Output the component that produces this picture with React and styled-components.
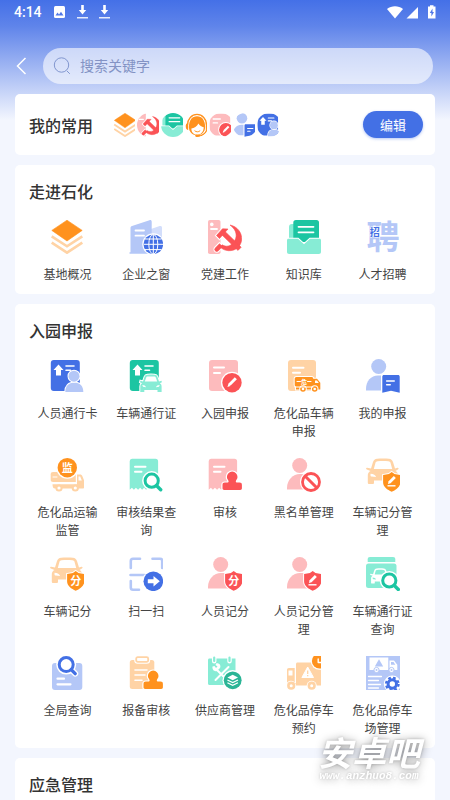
import React from 'react';
import styled, { createGlobalStyle } from 'styled-components';

const GlobalStyle = createGlobalStyle`
  * {
    box-sizing: border-box;
  }
  body {
    margin: 0;
    background: #f3f6fe;
    color: #333;
    font-family: 'Noto Sans CJK SC', sans-serif;
  }
  button,
  input {
    font-family: inherit;
  }
`;

const blue = '#4370e5';
const lightBlue = '#b4c7f7';
const orange = '#ff921e';
const lightOrange = '#ffd3a5';
const green = '#1cc5a2';
const lightGreen = '#87ecd5';
const red = '#fb5356';
const pink = '#fdbbbd';

const Page = styled.div`
  height: 100vh;
  overflow-y: auto;
  scrollbar-width: none;
  background: linear-gradient(#4470e7 0, #5f84ea 26px, #f3f6fe 120px);
`;

const StatusBar = styled.div`
  height: 24px;
  padding: 0 14px;
  display: flex;
  align-items: center;
  justify-content: space-between;
  color: #fff;
`;

const StatusGroup = styled.div`
  display: flex;
  align-items: center;
  gap: ${({ $gap }) => $gap};
`;

const Clock = styled.span`
  font-family: Roboto, sans-serif;
  font-size: 14px;
  font-weight: 500;
  line-height: 24px;
`;

const Header = styled.header`
  display: flex;
  align-items: center;
  padding: 24px 17px 10px 16px;
`;

const BackButton = styled.button`
  width: 27px;
  height: 36px;
  padding: 0;
  border: 0;
  background: none;
  display: flex;
  align-items: center;
  cursor: pointer;
`;

const SearchBox = styled.label`
  flex: 1;
  height: 36px;
  padding: 0 10px;
  display: flex;
  align-items: center;
  gap: 9px;
  border-radius: 18px;
  background: rgba(255, 255, 255, 0.6);
`;

const SearchInput = styled.input`
  flex: 1;
  min-width: 0;
  padding: 0 0 2px;
  border: 0;
  outline: 0;
  background: none;
  font-size: 14px;
  line-height: 20px;
  color: #333;
  &::placeholder {
    color: #8393c4;
    opacity: 1;
  }
`;

const Main = styled.main`
  padding: 0 15px;
  display: flex;
  flex-direction: column;
  gap: 10px;
`;

const Card = styled.section`
  background: #fff;
  border-radius: 5px;
`;

const Title = styled.h2`
  margin: 0;
  font-size: 16px;
  line-height: 24px;
  font-weight: 500;
  color: #333;
`;

const FavoriteCard = styled(Card)`
  height: 61px;
  padding: 0 12px 0 14px;
  display: flex;
  align-items: center;
`;

const Favorites = styled.div`
  flex: 1;
  padding-left: 20px;
  display: flex;
  gap: 2px;
`;

const FavoriteSlot = styled.div`
  width: 22px;
  height: 24px;
  overflow: hidden;
`;

const FavoriteCircle = styled.div`
  width: 24px;
  height: 24px;
  border-radius: 50%;
  overflow: hidden;
`;

const EditButton = styled.button`
  width: 60px;
  height: 27px;
  padding: 0;
  border: 0;
  border-radius: 14px;
  background: ${blue};
  box-shadow: 0 1px 3px rgba(67, 112, 229, 0.4);
  color: #fff;
  font-size: 13px;
  line-height: 26px;
  cursor: pointer;
`;

const SectionTitle = styled(Title)`
  padding: 14px 14px 17px;
`;

const Grid = styled.div`
  display: grid;
  grid-template-columns: repeat(5, 1fr);
  row-gap: 18px;
  padding: 0 13px 11px;
`;

const Item = styled.button`
  padding: 0 8px;
  border: 0;
  background: none;
  display: flex;
  flex-direction: column;
  align-items: center;
  gap: 11px;
  color: #444;
  font-size: 12px;
  line-height: 18px;
  text-align: center;
  cursor: pointer;
`;

const IconSvg = styled.svg`
  display: block;
  flex: none;
`;

const Watermark = styled.div`
  position: fixed;
  right: 30px;
  bottom: 19px;
  text-align: center;
  font-style: italic;
  color: #fff;
  pointer-events: none;
  text-shadow: 0 0 3px rgba(0, 0, 0, 0.2), 0 1px 10px rgba(0, 0, 0, 0.4);
`;

const WatermarkName = styled.div`
  font-size: 34px;
  line-height: 38px;
  font-weight: 700;
`;

const WatermarkSite = styled.div`
  font-family: 'Liberation Mono', monospace;
  font-size: 11px;
  line-height: 10px;
  font-weight: 700;
`;

const glyphFont = "'Noto Sans CJK SC', sans-serif";

const Lines = ({ d, color = '#fff', w = 2 }) => (
  <path d={d} stroke={color} strokeWidth={w} strokeLinecap="round" strokeLinejoin="round" fill="none" />
);

// pieces shared by several icons
const Pencil = () => (
  <g fill="#fff">
    <path d="M20.2 26.9l.6-2.7 6-6 2.1 2.1-6 6z" />
    <path d="M19.4 28l1-3 2 2z" />
  </g>
);

const Shield = ({ glyph }) => (
  <g>
    <path
      d="M25.7 14l2.8 2 5.8 1v7.6c0 4.4-4.3 7.4-8.6 9.2-4.3-1.8-8.6-4.8-8.6-9.2V17l5.8-1z"
      fill={glyph.color}
      stroke="#fff"
      strokeWidth="2"
      paintOrder="stroke"
    />
    {glyph.text ? (
      <text x="25.7" y="27.6" fontSize="11" fontWeight="700" textAnchor="middle" fill="#fff" fontFamily={glyphFont}>
        {glyph.text}
      </text>
    ) : (
      <g>
        <path d="M22 26l.6-2.8 5.2-5.2 2 2-5.2 5.2z" fill="#fff" />
        <path d="M21.5 27.8h8" stroke="#fff" strokeWidth="1.4" />
      </g>
    )}
  </g>
);

const Person = ({ color }) => (
  <g fill={color}>
    <circle cx="12.7" cy="7.5" r="7.5" />
    <path d="M0 31.5V30c0-8 6-14 13-14h4c6 0 8 5 8 10v5.5z" />
  </g>
);

const Magnifier = ({ cx, cy, r = 6.6, color, end = 9 }) => (
  <g fill="none" strokeLinecap="round">
    <circle cx={cx} cy={cy} r={r} stroke="#fff" strokeWidth="6" fill="#fff" />
    <path d={`M${cx + 5} ${cy + 5}L${cx + end} ${cy + end}`} stroke="#fff" strokeWidth="6" />
    <circle cx={cx} cy={cy} r={r} stroke={color} strokeWidth="3" />
    <path d={`M${cx + 5} ${cy + 5}L${cx + end} ${cy + end}`} stroke={color} strokeWidth="3.4" />
  </g>
);

const Stamp = ({ color, y = 0 }) => (
  <path
    transform={`translate(0 ${y})`}
    d="M24.2 13.6a5.3 5.3 0 0 1 5.3 5.3c0 2.2-1.7 3.200-1.700 4.600 0 .8.5 1.100 1.400 1.100h2.300c1.600 0 2.400.8 2.400 2.400v3.200c0 1.100-.6 1.700-1.700 1.700H16.200c-1.100 0-1.700-.6-1.700-1.700V27c0-1.600.8-2.400 2.400-2.400h2.300c.9 0 1.400-.3 1.400-1.100 0-1.400-1.700-2.400-1.700-4.600a5.300 5.300 0 0 1 5.300-5.300z"
    fill={color}
    stroke="#fff"
    strokeWidth="2.400"
    paintOrder="stroke"
  />
);

const Receipt = ({ color }) => (
  <g>
    <path
      d="M3 .7h23.5a2.6 2.6 0 0 1 2.6 2.6v28.4l-2-2-2 2-2-2-2 2-2-2-2 2-2-2-2 2-2-2-2 2-2.2-2-2 2-2-2-2.2 2V3.3A2.6 2.6 0 0 1 3 .7z"
      fill={color}
    />
    <Lines d="M6 8.7h10.5M6 13.7h6.5" />
  </g>
);

const CarSide = ({ color }) => (
  <path
    fillRule="evenodd"
    fill={color}
    d="M5 10.5L7 4c.7-2 2-3 4-3.300C14.500.3 19.500.3 23 .7c2 .3 3.300 1.300 4 3.300l2 6.500 2.500-.8c1.200-.3 1.500 1.300.4 1.800L29.500 13c2 1 2.500 2.500 2.500 4.500v7c0 1-.6 1.500-1.500 1.500H27.500c-1 0-1.500-.5-1.500-1.500V22.500H8v2c0 1-.5 1.500-1.500 1.500H3.300c-1 0-1.500-.5-1.500-1.500v-7c0-2 .7-3.500 2.700-4.500L.8 11.500C-.4 11 0 9.400 1.200 9.700zM7.800 11h18.400L24.500 4.700c-.4-1-1-1.400-2-1.500-3.500-.4-7.500-.4-11 0-1 .1-1.600.5-2 1.500zM4.500 15.800v1.500c0 .8.4 1.200 1.200 1.300l4.300.5c-.3-2-2.500-3.200-5.500-3.300zM28.500 15.800c-3 .1-5.200 1.300-5.500 3.300l4.300-.5c.8-.1 1.200-.5 1.200-1.300z"
  />
);

const PassCard = ({ color }) => (
  <g>
    <rect x=".8" y="1" width="29" height="31" rx="3" fill={color} />
    <path d="M8.500 5.500l5 5.500h-2.500v5.500H6V11H3.500z" fill="#fff" />
    <Lines d="M16 7h8M16 11.200h4.500" w={1.600} />
  </g>
);

const icons = {
  layers: (
    <g>
      <path d="M17 .2L32.200 10.400 17 21 1.800 10.400z" fill={orange} stroke={orange} strokeWidth=".6" strokeLinejoin="round" />
      <path d="M1.700 16.300l15.300 10 15.300-10M1.700 22.700l15.300 10 15.300-10" fill="none" stroke={lightOrange} strokeWidth="2.600" />
    </g>
  ),
  building: (
    <g>
      <path d="M22 9l8.700-3c1.300-.4 2.300.3 2.300 1.500V24H22z" fill="#d3defb" />
      <path d="M1.500 8c0-1 .5-1.700 1.500-2L20.500.2c1.300-.4 2.200.3 2.200 1.500V33.700H.5v-1.500h1z" fill={lightBlue} />
      <Lines d="M6.500 10.500h8.500M6.500 15.700h8.500" w={1.800} />
      <circle cx="24.300" cy="24.300" r="11" fill="#fff" />
      <circle cx="24.300" cy="24.300" r="9.800" fill={blue} />
      <g fill="none" stroke="#fff" strokeWidth="1">
        <ellipse cx="24.300" cy="24.300" rx="4.500" ry="9.800" />
        <path d="M24.300 14.500v19.600M14.500 24.300h19.600M16 19h16.600M16 29.600h16.600" />
      </g>
    </g>
  ),
  party: (
    <g>
      <rect x="0" y="0" width="12.500" height="34" rx="1.800" fill={pink} />
      <circle cx="3.800" cy="4.400" r="1.800" fill="#fff" />
      <Lines d="M3 9h6" w={1.800} />
      {[
        { color: '#fff', w: 2.600 },
        { color: red, w: 0.600 },
      ].map(({ color, w }) => (
        <g key={color} fill={color} stroke={color} strokeWidth={w}>
          <path d="M22 5c7.500 1.500 12.300 8 11.600 15-.7 6.500-6 11-13 10.700-3.500-.2-6.300-1.500-8.300-3.700l1.800-2.200c4 2.600 8.400 1.500 11.400-2.300 4-5 4-12-3.500-17.500z" />
          <path d="M8.500 15.500l6-6.700 5.500.2-8.500 9.500z" />
          <path d="M13.500 14.500l3.200-3.300 16.500 16-3.200 3.200z" />
          <path d="M11.500 23.700l3 2.900-4.200 4.200a2 2 0 0 1-3-2.800z" />
        </g>
      ))}
    </g>
  ),
  library: (
    <g>
      <rect x="2" y="4" width="14" height="22" rx="3" fill={lightGreen} />
      <path d="M9 0h20.500A2.500 2.500 0 0 1 32 2.500V22H6.300V2.700A2.700 2.700 0 0 1 9 0z" fill={green} />
      <path
        d="M1.500 18.700H11l6 5.500 6-5.500h9.500c1 0 1.500.6 1.500 1.500v11.600c0 1.500-.8 2.200-2.200 2.200H2.200C.8 34 0 33.300 0 31.800V20.200c0-.9.500-1.500 1.500-1.500z"
        fill={lightGreen}
        stroke="#fff"
        strokeWidth="2"
        paintOrder="stroke"
      />
      <Lines d="M11.500 6.800h15M11.500 12.300h15" w={1.800} />
    </g>
  ),
  recruit: (
    <g fontFamily={glyphFont} fontWeight="700">
      <text x="17" y="29" fontSize="33" textAnchor="middle" fill={lightBlue}>
        聘
      </text>
      <text x="8.700" y="16" fontSize="10" textAnchor="middle" fill={blue} stroke="#fff" strokeWidth="1" paintOrder="stroke">
        招
      </text>
    </g>
  ),
  personPass: (
    <g>
      <PassCard color={blue} />
      <g fill={lightBlue} stroke="#fff" strokeWidth="2" paintOrder="stroke">
        <path d="M15.300 33c0-6 3.500-9.500 9-9.500s9 3.500 9 9.500z" />
        <circle cx="24" cy="17.200" r="5.500" />
      </g>
    </g>
  ),
  carPass: (
    <g>
      <PassCard color={green} />
      <path
        d="M14 22.500l1.500-4.500c.5-1.500 1.500-2.200 3-2.300 2.300-.2 4.700-.2 7 0 1.500.1 2.500.8 3 2.300l1.500 4.500 2.500-.8.4 1.500-2 1c1.200.8 1.700 1.700 1.700 3.300V33h-4.100v-2H15.300v2h-4v-5.500c0-1.600.5-2.500 1.700-3.300l-2-1 .4-1.500z"
        fill={lightGreen}
        stroke="#fff"
        strokeWidth="2"
        paintOrder="stroke"
      />
      <path d="M15.800 22.500l1.300-3.700c.3-.8.800-1.100 1.600-1.200 2-.2 4.400-.2 6.600 0 .8.100 1.300.4 1.600 1.200l1.300 3.700z" fill="#fff" />
      <path d="M13.300 26c2 0 3.200.7 3.700 2.200l-3-.4zM30.700 26c-2 0-3.200.7-3.700 2.200l3-.4z" fill="#fff" />
    </g>
  ),
  docEdit: (
    <g>
      <rect x="1" y="1" width="29" height="31" rx="3" fill={pink} />
      <Lines d="M6 8.500h10M6 14h6" />
      <circle cx="24" cy="23.700" r="11" fill="#fff" />
      <circle cx="24" cy="23.700" r="9.700" fill={red} />
      <Pencil />
    </g>
  ),
  hazardDoc: (
    <g>
      <rect x="1" y="1" width="28" height="31" rx="3" fill={lightOrange} />
      <Lines d="M6 8.700h10.500M6 13.700h7" />
      <g fill={orange} stroke="#fff" strokeWidth="2" paintOrder="stroke">
        <path d="M9.500 18h15c1 0 1.700.7 1.700 1.700h3.800l3.300 4v6.800H9v-2.800c-.9-.3-1.300-1-1.300-1.900v-6c0-1 .7-1.800 1.800-1.800z" />
        <circle cx="16" cy="30" r="2.800" />
        <circle cx="27.700" cy="30" r="2.800" />
      </g>
      <path d="M28 21.500h2l1.800 2.600H28z" fill="#fff" />
      <circle cx="16" cy="30" r="1.300" fill="#fff" />
      <circle cx="27.700" cy="30" r="1.300" fill="#fff" />
      <Lines d="M10 22.500h3.500M20.500 22.500H24M8 28h18" w={1} />
      <text x="17" y="25" fontSize="6" fontWeight="700" textAnchor="middle" fill="#fff" fontFamily={glyphFont}>
        危
      </text>
    </g>
  ),
  myApply: (
    <g>
      <circle cx="12.700" cy="7.500" r="7.500" fill={lightBlue} />
      <path d="M0 31.500V30c0-8 5-13.500 12-13.500h3v15z" fill={lightBlue} />
      <path
        d="M18 16h14c1 0 1.700.7 1.700 1.700v16.100L25 31.700l-8.700 2.100V17.700c0-1 .7-1.700 1.700-1.700z"
        fill={blue}
        stroke="#fff"
        strokeWidth="2"
        paintOrder="stroke"
      />
      <Lines d="M20.700 22h7.500M20.700 25.800h3.500" w={1.600} />
    </g>
  ),
  transport: (
    <g>
      <path
        d="M3 14h20.500c1.500 0 2.300.8 2.300 2.200V24H3C1.500 24 .7 23.200.7 21.800v-5.600C.7 14.800 1.500 14 3 14z"
        fill={lightOrange}
      />
      <path
        d="M27 16.500h3c1.200 0 2 .6 2.400 1.700l1.600 4v7.300c0 .7-.4 1-1 1H5c-1.700 0-2.500-1.500-2.500-4.300h24.500z"
        fill={lightOrange}
      />
      <path d="M28.500 18.500h1.700l1.600 4h-3.300z" fill="#fff" />
      <Lines d="M3 19h4" w={1} />
      <g fill="#fff" stroke={lightOrange} strokeWidth="2">
        <circle cx="9" cy="30" r="2.600" />
        <circle cx="25.300" cy="30" r="2.600" />
      </g>
      <circle cx="17.300" cy="9.700" r="11" fill="#fff" />
      <circle cx="17.300" cy="9.700" r="9.700" fill={orange} />
      <text x="17.300" y="13.900" fontSize="11" fontWeight="700" textAnchor="middle" fill="#fff" fontFamily={glyphFont}>
        监
      </text>
    </g>
  ),
  auditQuery: (
    <g>
      <Receipt color={lightGreen} />
      <Magnifier cx={22.700} cy={22.700} color={green} />
    </g>
  ),
  audit: (
    <g>
      <Receipt color={pink} />
      <Stamp color={red} />
    </g>
  ),
  blacklist: (
    <g>
      <Person color={pink} />
      <circle cx="24" cy="24" r="11" fill="#fff" />
      <circle cx="24" cy="24" r="8.500" fill="none" stroke={red} strokeWidth="2.800" />
      <path d="M18 18l12 12" stroke={red} strokeWidth="3" />
    </g>
  ),
  carScoreManage: (
    <g>
      <CarSide color={lightOrange} />
      <Shield glyph={{ color: orange }} />
    </g>
  ),
  carScore: (
    <g>
      <CarSide color={lightOrange} />
      <Shield glyph={{ color: orange, text: '分' }} />
    </g>
  ),
  scan: (
    <g>
      <Lines
        d="M1.800 11V4c0-1.500.7-2.200 2.200-2.200h7M23.500 1.800H31c1.500 0 2.200.7 2.200 2.200v7M1.800 24v6.500c0 1.500.7 2.200 2.200 2.200h6M1.500 18h14"
        color={lightBlue}
        w={2.600}
      />
      <circle cx="24.300" cy="24.300" r="11" fill="#fff" />
      <circle cx="24.300" cy="24.300" r="9.800" fill={blue} />
      <path d="M18.800 22.300h5.700v-3.300l6.300 5.300-6.300 5.300v-3.300h-5.700z" fill="#fff" />
    </g>
  ),
  personScore: (
    <g>
      <Person color={pink} />
      <Shield glyph={{ color: red, text: '分' }} />
    </g>
  ),
  personScoreManage: (
    <g>
      <Person color={pink} />
      <Shield glyph={{ color: red }} />
    </g>
  ),
  carPassQuery: (
    <g>
      <path d="M4 0h23c1.500 0 2.300.8 2.300 2.300V5H1.700V2.300C1.700.8 2.500 0 4 0z" fill={lightGreen} />
      <rect x="0" y="6.500" width="30.500" height="24.500" rx="2.500" fill={lightGreen} />
      <g transform="translate(4 11) scale(.6)">
        <CarSide color="#fff" />
      </g>
      <Magnifier cx={23.300} cy={23.500} color={green} />
    </g>
  ),
  globalQuery: (
    <g>
      <rect x="2" y="7" width="30.300" height="27" rx="3" fill={lightBlue} />
      <Magnifier cx={16.200} cy={8.600} r={7} color={blue} />
      <Lines d="M7.500 22.700H14M7.500 28.300h13" w={2.200} />
    </g>
  ),
  reportAudit: (
    <g>
      <rect x=".8" y="4" width="24.500" height="29" rx="2.500" fill={lightOrange} />
      <rect x="7.200" y="1.200" width="12" height="4.600" rx="1.500" fill="#fff" stroke="#fff" strokeWidth="4" />
      <rect x="7.200" y="1.200" width="12" height="4.600" rx="1.500" fill="#fff" stroke={lightOrange} strokeWidth="1.800" />
      <Lines d="M6 14h12M6 19h10M6 24.200h7" w={1.600} />
      <Stamp color={orange} y={1} />
    </g>
  ),
  supplier: (
    <g>
      <path d="M1.500 2.500h26v26.500h-26C.6 29 0 28.400 0 27.500V4c0-.9.600-1.500 1.500-1.500z" fill={lightGreen} />
      <Lines d="M6.200 1.800v3.500M21.500 1.800v3.500" w={4.500} />
      <Lines d="M6.200 1.500v3.500M21.500 1.500v3.500" color={lightGreen} w={2.200} />
      <Lines d="M8 13l11.500 11.500M20.500 11L7.500 24" w={2} />
      <path d="M4.500 10.500l2-.5 1.500 2 1.500-1.500-2-1.500.8-1.800c3-.5 5 2 3.700 4.800L9 15c-2.800 1-5-1.500-4.500-4.500z" fill="#fff" />
      <circle cx="24.700" cy="24.300" r="10.200" fill="#fff" />
      <circle cx="24.700" cy="24.300" r="8.900" fill="#2bb596" />
      <path d="M24.700 18.800l5.300 2.700-5.300 2.700-5.300-2.700z" fill="#fff" />
      <path d="M19.400 24l5.300 2.600 5.300-2.600M19.400 26.700l5.300 2.600 5.300-2.600" stroke="#fff" strokeWidth="1.200" fill="none" />
    </g>
  ),
  parkingBook: (
    <g>
      <path d="M9 8c0-1 .6-1.600 1.600-1.600H34v22H9z" fill={lightOrange} />
      <path d="M0 29V14c0-1.200.7-1.900 1.900-1.900H7.700V29z" fill={lightOrange} />
      <rect x="0" y="27" width="34" height="2.500" fill={lightOrange} />
      <rect x="1.500" y="14.500" width="4" height="5" fill="#fff" />
      <path d="M20.700 11l5.800 10.500H14.900z" fill="#fff" stroke="#fff" strokeLinejoin="round" />
      <path d="M20.700 14.500v3.500M20.700 19v1.300" stroke={lightOrange} strokeWidth="1.300" />
      <circle cx="4" cy="29.700" r="5" fill="#fff" />
      <circle cx="24.700" cy="29.700" r="5" fill="#fff" />
      <g fill="#fff" stroke={lightOrange} strokeWidth="2.600">
        <circle cx="4.200" cy="29.700" r="2.800" />
        <circle cx="24.700" cy="29.700" r="2.800" />
      </g>
      <circle cx="32.500" cy="5" r="8.800" fill="#fff" />
      <circle cx="32.500" cy="5" r="7.600" fill={orange} />
      <Lines d="M31.200 3v3.500h3" w={1.400} />
    </g>
  ),
  parkingManage: (
    <g>
      <rect width="34" height="34" fill={lightBlue} />
      <path d="M3.500 1.500h18.800V14H3.500zM23.500 4.500H28l3.300 4.300V14h-7.800z" fill="#fff" />
      <path d="M13 3.300l4.200 7.200H8.800z" fill={lightBlue} />
      <path d="M25 6h2.500l1.800 2.700H25z" fill={lightBlue} />
      <g fill="#fff" stroke={lightBlue} strokeWidth="1">
        <circle cx="10.500" cy="14" r="2.600" />
        <circle cx="25.500" cy="14" r="2.600" />
      </g>
      <g fill={lightBlue}>
        <circle cx="10.500" cy="14" r="1" />
        <circle cx="25.500" cy="14" r="1" />
      </g>
      <Lines d="M2.500 20.500h13M2.500 24.500h10M2.500 28.500h12M2.500 32h10" w={1.300} />
      <circle cx="26.300" cy="28" r="8.500" fill="#fff" />
      <circle cx="26.300" cy="28" r="4.200" fill="none" stroke={blue} strokeWidth="3" />
      <circle cx="26.300" cy="28" r="6.300" fill="none" stroke={blue} strokeWidth="2.200" strokeDasharray="2.700 2.250" />
    </g>
  ),
  service: (
    <g>
      <path d="M3.500 17a13.500 15 0 0 1 27 0" fill="none" stroke={orange} strokeWidth="1.800" />
      <path d="M1 19c0-3 1-5 3.500-5v10C2.500 24 1 22 1 19zM33 19c0-3-1-5-3.500-5v10c2 0 3.500-2 3.500-5z" fill={orange} />
      <path d="M5.500 20C5.500 10 10 4.500 17 4.500S28.500 10 28.500 20c0 7-5 12-11.500 12S5.500 27 5.500 20z" fill={orange} />
      <path d="M9 22c4-.3 8-3 10-7 2 3 4.500 4.800 7.500 5.300 0 6-3.800 10.700-8.800 10.700S9 27.500 9 22z" fill="#fff" />
      <path d="M13.500 25c2.500 2.200 5.500 2.200 8 0" fill="none" stroke={orange} strokeWidth="1.400" />
      <path d="M31 23c-1 5-4 8-10 9.500" fill="none" stroke={orange} strokeWidth="1.600" />
      <rect x="14.500" y="30.500" width="7" height="3.500" rx="1.700" fill={orange} />
    </g>
  ),
};

const Icon = ({ name, size = 34 }) => (
  <IconSvg width={size} height={size} viewBox="0 0 34 34" aria-hidden="true">
    {icons[name]}
  </IconSvg>
);

const DownloadIcon = () => (
  <IconSvg width="11" height="14" viewBox="0 0 11 14" fill="#fff">
    <path d="M4.200 0h2.600v5h2.400L5.500 9.500 1.800 5h2.400z" />
    <path d="M0 12h11v1.500H0z" opacity=".85" />
  </IconSvg>
);

const favorites = ['layers', 'party', 'library', 'service', 'docEdit', 'myApply', 'personPass'];

const sections = [
  {
    title: '走进石化',
    items: [
      ['layers', '基地概况'],
      ['building', '企业之窗'],
      ['party', '党建工作'],
      ['library', '知识库'],
      ['recruit', '人才招聘'],
    ],
  },
  {
    title: '入园申报',
    items: [
      ['personPass', '人员通行卡'],
      ['carPass', '车辆通行证'],
      ['docEdit', '入园申报'],
      ['hazardDoc', '危化品车辆申报'],
      ['myApply', '我的申报'],
      ['transport', '危化品运输监管'],
      ['auditQuery', '审核结果查询'],
      ['audit', '审核'],
      ['blacklist', '黑名单管理'],
      ['carScoreManage', '车辆记分管理'],
      ['carScore', '车辆记分'],
      ['scan', '扫一扫'],
      ['personScore', '人员记分'],
      ['personScoreManage', '人员记分管理'],
      ['carPassQuery', '车辆通行证查询'],
      ['globalQuery', '全局查询'],
      ['reportAudit', '报备审核'],
      ['supplier', '供应商管理'],
      ['parkingBook', '危化品停车预约'],
      ['parkingManage', '危化品停车场管理'],
    ],
  },
  { title: '应急管理', items: [] },
];

const App = () => {
  const [keyword, setKeyword] = React.useState('');

  return (
    <Page>
      <GlobalStyle />
      <StatusBar>
        <StatusGroup $gap="12px">
          <Clock>4:14</Clock>
          <IconSvg width="11" height="12" viewBox="0 0 11 12">
            <rect width="11" height="12" rx="1.500" fill="#fff" />
            <path d="M1.500 9.500L3.500 6.500l1.500 2 2-2.700 2.500 3.700z" fill="#5078e8" />
          </IconSvg>
          <StatusGroup $gap="11px">
            <DownloadIcon />
            <DownloadIcon />
          </StatusGroup>
        </StatusGroup>
        <StatusGroup $gap="3px">
          <IconSvg width="16" height="13" viewBox="0 0 16 13">
            <path d="M8 12.500L0 3c4.500-3.700 11.500-3.700 16 0z" fill="#fff" />
          </IconSvg>
          <IconSvg width="12" height="13" viewBox="0 0 12 13">
            <path d="M12 1v11.500H.5z" fill="#fff" />
          </IconSvg>
          <IconSvg width="15" height="14" viewBox="0 0 15 14">
            <path d="M7 1.500h2V.3h3.500v1.200h2V13.500H7z" fill="#fff" />
            <path d="M11.500 3.500L8.800 8h1.600v3.500L13 7h-1.500z" fill="#5078e8" />
          </IconSvg>
        </StatusGroup>
      </StatusBar>

      <Header>
        <BackButton aria-label="返回">
          <IconSvg width="11" height="18" viewBox="0 0 11 18">
            <path d="M9.500 1L1.500 9l8 8" fill="none" stroke="#fff" strokeWidth="1.500" />
          </IconSvg>
        </BackButton>
        <SearchBox>
          <IconSvg width="18" height="18" viewBox="0 0 18 18">
            <circle cx="8.500" cy="8" r="7.200" fill="none" stroke="#8196cf" />
            <path d="M13.800 13.800l3 3" stroke="#8196cf" />
          </IconSvg>
          <SearchInput
            aria-label="搜索"
            placeholder="搜索关键字"
            value={keyword}
            onChange={({ currentTarget: { value } }) => {
              setKeyword(value);
            }}
          />
        </SearchBox>
      </Header>

      <Main>
        <FavoriteCard>
          <Title>我的常用</Title>
          <Favorites>
            {favorites.map(name => (
              <FavoriteSlot key={name}>
                <FavoriteCircle>
                  <Icon name={name} size={24} />
                </FavoriteCircle>
              </FavoriteSlot>
            ))}
          </Favorites>
          <EditButton>编辑</EditButton>
        </FavoriteCard>

        {sections.map(({ title, items }) => (
          <Card key={title}>
            <SectionTitle>{title}</SectionTitle>
            <Grid>
              {items.map(([icon, label]) => (
                <Item key={label}>
                  <Icon name={icon} />
                  <span>{label}</span>
                </Item>
              ))}
            </Grid>
          </Card>
        ))}
      </Main>

      <Watermark>
        <WatermarkName>安卓吧</WatermarkName>
        <WatermarkSite>www.anzhuo8.com</WatermarkSite>
      </Watermark>
    </Page>
  );
};

export default App;
